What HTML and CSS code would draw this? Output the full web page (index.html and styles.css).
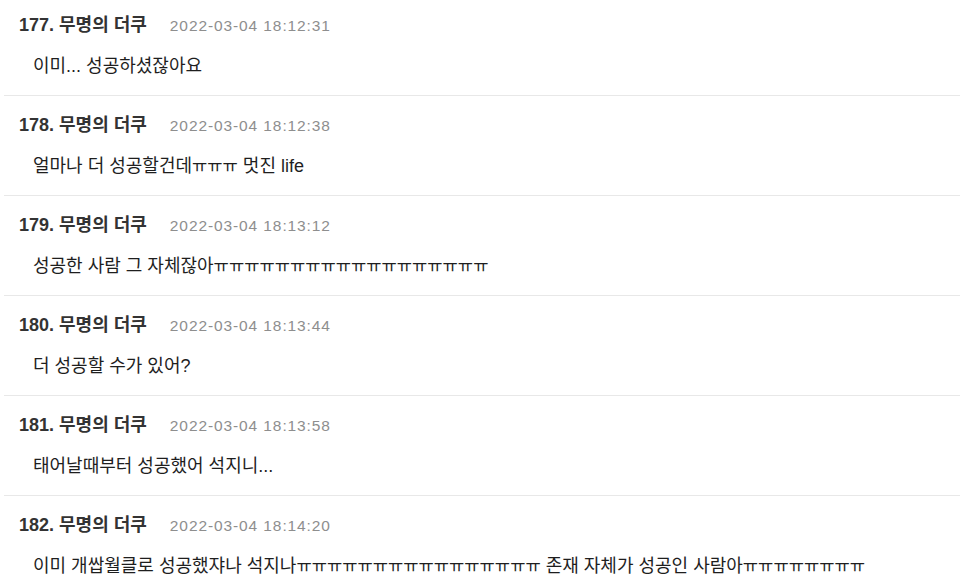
FILE: index.html
```html
<!DOCTYPE html>
<html lang="ko">
<head>
  <meta charset="UTF-8">
  <meta name="viewport" content="width=device-width, initial-scale=1.0">
  <title>댓글</title>
  <link rel="stylesheet" href="styles.css">
</head>
<body>

<ul class="comments">
  <li class="comment">
    <div class="head"><span class="name">177. 무명의 더쿠</span><span class="date">2022-03-04 18:12:31</span></div>
    <div class="text">이미... 성공하셨잖아요</div>
  </li>
  <li class="comment">
    <div class="head"><span class="name">178. 무명의 더쿠</span><span class="date">2022-03-04 18:12:38</span></div>
    <div class="text">얼마나 더 성공할건데<span class="cry">ㅠㅠㅠ</span> 멋진 life</div>
  </li>
  <li class="comment">
    <div class="head"><span class="name">179. 무명의 더쿠</span><span class="date">2022-03-04 18:13:12</span></div>
    <div class="text">성공한 사람 그 자체잖아<span class="cry">ㅠㅠㅠㅠㅠㅠㅠㅠㅠㅠㅠㅠㅠㅠㅠㅠㅠㅠ</span></div>
  </li>
  <li class="comment">
    <div class="head"><span class="name">180. 무명의 더쿠</span><span class="date">2022-03-04 18:13:44</span></div>
    <div class="text">더 성공할 수가 있어?</div>
  </li>
  <li class="comment">
    <div class="head"><span class="name">181. 무명의 더쿠</span><span class="date">2022-03-04 18:13:58</span></div>
    <div class="text">태어날때부터 성공했어 석지니...</div>
  </li>
  <li class="comment">
    <div class="head"><span class="name">182. 무명의 더쿠</span><span class="date">2022-03-04 18:14:20</span></div>
    <div class="text">이미 개쌉월클로 성공했쟈나 석지나<span class="cry">ㅠㅠㅠㅠㅠㅠㅠㅠㅠㅠㅠㅠㅠㅠㅠㅠ</span> 존재 자체가 성공인 사람아<span class="cry">ㅠㅠㅠㅠㅠㅠㅠㅠ</span></div>
  </li>
</ul>

</body>
</html>
```

FILE: styles.css
```css
body {
  font-family: "Liberation Sans", "Noto Sans CJK KR", sans-serif;
  background-color: #fff;
  color: #1e1e1e;
  margin: 0;
  overflow: hidden;
}

.comments {
  list-style: none;
  margin: -4px 0 0 4px;
  padding: 0;
}

.comment {
  padding: 17px 0 17px 15px;
  border-bottom: 1px solid #e8e8e8;
}

.head {
  display: flex;
  align-items: baseline;
  height: 24px;
  line-height: 24px;
}

.name {
  font-size: 18px;
  font-weight: bold;
  color: #333;
  margin-right: 23px;
}

.date {
  font-size: 15.5px;
  letter-spacing: 0.9px;
  color: #8e8e8e;
}

.text {
  margin-top: 17px;
  padding-left: 14px;
  font-size: 18px;
  height: 24px;
  line-height: 24px;
  white-space: nowrap;
}

.cry {
  font-size: 16.6px;
}
```
